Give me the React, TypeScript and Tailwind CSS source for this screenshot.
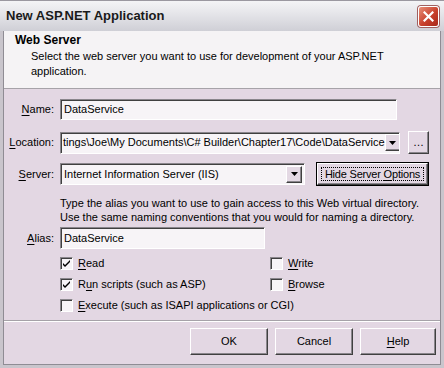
import React from 'react';

// Access-key label: underlines one letter like a classic Win32 dialog
function Key({ text, k }: { text: string; k: number }) {
  return (
    <span>
      {text.slice(0, k)}
      <span className="underline underline-offset-[2px]">{text[k]}</span>
      {text.slice(k + 1)}
    </span>
  );
}

function Sunken({ className, children }: { className?: string; children?: React.ReactNode }) {
  return (
    <div
      className={`flex items-center bg-[#f7f4f7] border-t border-l border-t-[#8a868c] border-l-[#8a868c] border-b border-r border-b-[#ffffff] border-r-[#ffffff] shadow-[inset_1px_1px_0_#404040] ${className ?? ''}`}
    >
      {children}
    </div>
  );
}

function DropArrow() {
  return (
    <div className="mr-[2px] w-[16px] h-[17px] shrink-0 flex items-center justify-center bg-[#e4d9e4] border-t border-l border-t-white border-l-white border-b border-r border-b-[#404040] border-r-[#404040] shadow-[inset_-1px_-1px_0_#8a868c]">
      <svg width="7" height="4" viewBox="0 0 7 4">
        <path d="M0 0h7L3.5 4z" fill="#000" />
      </svg>
    </div>
  );
}

function Button({ className, children, def }: { className?: string; children: React.ReactNode; def?: boolean }) {
  return (
    <div
      className={`flex items-center justify-center bg-[#e3d7e3] ${
        def ? 'border border-black' : ''
      } ${className ?? ''}`}
    >
      <div className="w-full h-full flex items-center justify-center border-t border-l border-t-white border-l-white border-b border-r border-b-[#404040] border-r-[#404040] shadow-[inset_-1px_-1px_0_#8a868c]">
        {def ? (
          <div className="h-[calc(100%-6px)] w-[calc(100%-6px)] flex items-center justify-center outline outline-1 outline-dotted outline-black -outline-offset-1">
            {children}
          </div>
        ) : (
          children
        )}
      </div>
    </div>
  );
}

function Check({ checked, label, k, className }: { checked?: boolean; label: string; k: number; className?: string }) {
  return (
    <div className={`flex items-center gap-[5px] h-[21px] whitespace-nowrap ${className ?? ''}`}>
      <div className="w-[13px] h-[13px] shrink-0 bg-[#f7f4f7] border-t border-l border-t-[#8a868c] border-l-[#8a868c] border-b border-r border-b-white border-r-white shadow-[inset_1px_1px_0_#404040] flex items-center justify-center">
        {checked && (
          <svg width="9" height="9" viewBox="0 0 9 9">
            <path d="M1 4l2 2 5-5v2L3 8 1 6z" fill="#000" />
          </svg>
        )}
      </div>
      <Key text={label} k={k} />
    </div>
  );
}

export default function App() {
  return (
    <div className="w-[444px] h-[368px] flex flex-col bg-[#c9c5cc] text-[11px] text-black font-['Liberation_Sans',Arial,sans-serif] overflow-hidden">
      {/* title bar */}
      <div className="h-[31px] shrink-0 flex items-center justify-between pl-[6px] pr-[5px] border-t border-[#9b98a0] bg-[linear-gradient(#f4f4f6,#e6e6ea_40%,#cfcfd6)]">
        <span className="font-bold text-[13px] text-[#1a1a1a]">New ASP.NET Application</span>
        <div className="w-[21px] h-[21px] rounded-[3px] border border-white bg-[linear-gradient(135deg,#e8907a,#c8402c_55%,#a8281a)] flex items-center justify-center shadow-[0_0_0_1px_#a06060]">
          <svg width="11" height="11" viewBox="0 0 11 11">
            <path d="M1.5 1.5l8 8M9.5 1.5l-8 8" stroke="#fff" strokeWidth="2.2" strokeLinecap="square" />
          </svg>
        </div>
      </div>

      <div className="flex-1 flex flex-col mx-[3px] mb-[3px] border border-[#8f8c94] border-t-0">
        {/* header */}
        <div className="h-[58px] shrink-0 bg-[#f5f3f5] pl-[11px] pt-[2px] border-b border-[#a6a2a8] shadow-[0_1px_0_#ffffff]">
          <div className="font-bold text-[12px] leading-[15px]">Web Server</div>
          <div className="pl-[16px] pt-[1px] leading-[15px] w-[390px]">
            Select the web server you want to use for development of your ASP.NET application.
          </div>
        </div>

        {/* form */}
        <div className="flex-1 flex flex-col bg-[#e3d7e3] pt-[10px]">
          <div className="grid grid-cols-[50px_1fr] gap-x-[6px] items-center">
            <div className="text-right"><Key text="Name:" k={0} /></div>
            <Sunken className="w-[337px] h-[21px] pl-[3px]">DataService</Sunken>
          </div>

          <div className="mt-[11px] grid grid-cols-[50px_1fr] gap-x-[6px] items-center">
            <div className="text-right"><Key text="Location:" k={0} /></div>
            <div className="flex items-center gap-[8px]">
              <Sunken className="w-[340px] h-[22px] pl-[2px] justify-between overflow-hidden">
                <span className="whitespace-nowrap">tings\Joe\My Documents\C# Builder\Chapter17\Code\DataService</span>
                <DropArrow />
              </Sunken>
              <Button className="w-[21px] h-[23px]">…</Button>
            </div>
          </div>

          <div className="mt-[8px] grid grid-cols-[50px_1fr] gap-x-[6px] items-center">
            <div className="text-right"><Key text="Server:" k={0} /></div>
            <div className="flex items-center gap-[11px]">
              <Sunken className="w-[245px] h-[22px] pl-[3px] justify-between">
                <span>Internet Information Server (IIS)</span>
                <DropArrow />
              </Sunken>
              <Button def className="w-[113px] h-[24px]">
                <span className="whitespace-nowrap tracking-[-0.2px]">
                  Hide Server <Key text="Options" k={0} />
                </span>
              </Button>
            </div>
          </div>

          <div className="pl-[56px] pt-[10px] leading-[14px]">
            Type the alias you want to use to gain access to this Web virtual directory.
            <br />
            Use the same naming conventions that you would for naming a directory.
          </div>

          <div className="mt-[3px] grid grid-cols-[50px_1fr] gap-x-[6px] items-center">
            <div className="text-right"><Key text="Alias:" k={0} /></div>
            <Sunken className="w-[205px] h-[22px] pl-[3px]">DataService</Sunken>
          </div>

          <div className="mt-[4px] pl-[56px] grid grid-cols-[210px_1fr]">
            <Check checked label="Read" k={0} />
            <Check label="Write" k={0} />
            <Check checked label="Run scripts (such as ASP)" k={1} />
            <Check label="Browse" k={0} />
            <Check label="Execute (such as ISAPI applications or CGI)" k={0} className="col-span-2" />
          </div>
        </div>

        {/* footer */}
        <div className="h-[44px] shrink-0 bg-[#e3d7e3] border-t border-[#a6a2a8] shadow-[inset_0_1px_0_#ffffff] flex items-start justify-end gap-[7px] pt-[7px] pr-[4px]">
          <Button className="w-[78px] h-[27px]">OK</Button>
          <Button className="w-[78px] h-[27px]">Cancel</Button>
          <Button className="w-[76px] h-[27px]"><Key text="Help" k={0} /></Button>
        </div>
      </div>
    </div>
  );
}
